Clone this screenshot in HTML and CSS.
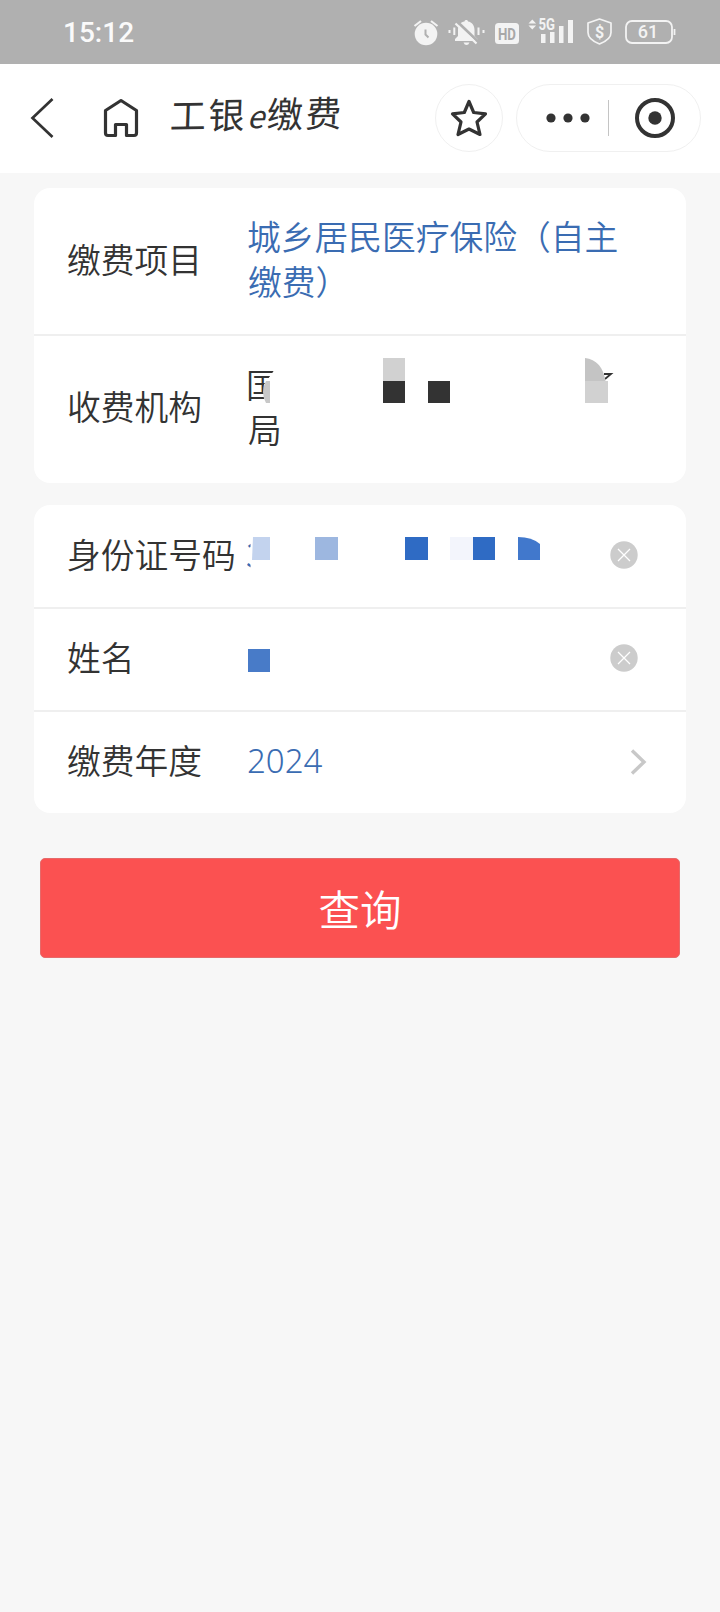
FILE: index.html
```
<!DOCTYPE html>
<html lang="zh-CN">

<head>
    <meta charset="UTF-8">
    <meta name="viewport" content="width=device-width, initial-scale=1.0">
    <title>工银e缴费</title>
    <link rel="stylesheet" href="styles.css">
</head>

<body>
    <div class="status">
        <span class="time">15:12</span>
        <svg class="status-icons" width="280" height="64" viewBox="400 0 280 64">
            <!-- alarm -->
            <circle cx="427" cy="34" r="11.3" fill="#f3f3f3" />
            <path d="M415.5 26l6.5-5M432 21l6.5 5" stroke="#f3f3f3" stroke-width="2.2" fill="none" />
            <path d="M426.5 29.5v5l3 3" stroke="#b0b0b0" stroke-width="2" fill="none" />
            <!-- muted bell -->
            <path d="M456 41v-2l3-3v-6c0-5 3-8 6.500-8.500c0-2 3.500-2 3.500 0c4 .5 6.500 4 6.500 8.500v6l3 3v2z" fill="#f3f3f3" />
            <path d="M464.500 42.500h6q-1 2.500-3 2.500t-3-2.500z" fill="#f3f3f3" />
            <path d="M458.500 22l22 21" stroke="#b0b0b0" stroke-width="3" />
            <path d="M456.500 23.500l21 20" stroke="#f3f3f3" stroke-width="2.200" />
            <path d="M450.500 30v3M455.300 27.500v7.500M479.500 27.500v7.500M484.500 30v3" stroke="#f3f3f3" stroke-width="2" />
            <!-- hd -->
            <rect x="496" y="23" width="24" height="21" rx="3.500" fill="#f3f3f3" />
            <text class="hd" x="508" y="39.500" text-anchor="middle" textLength="18" lengthAdjust="spacingAndGlyphs">HD</text>
            <!-- signal -->
            <path d="M529.500 23.500l3.800-4 3.800 4zM529.500 25.500l3.800 4 3.800-4z" fill="#f3f3f3" />
            <path d="M542 34h4.500v9h-4.500zM551 32h4.500v11h-4.500zM560 26h4.500v17h-4.500zM569 20h5v23h-5z" fill="#f3f3f3" />
            <text class="net" x="539.500" y="30" textLength="16.500" lengthAdjust="spacingAndGlyphs">5G</text>
            <!-- shield -->
            <path d="M600.500 19l11.500 4v9.500c0 5-5 9-11.500 11.500c-6.500-2.500-11.500-6.500-11.500-11.500v-9.500z" fill="none" stroke="#f3f3f3" stroke-width="1.700" stroke-linejoin="round" />
            <text class="dollar" x="600.500" y="37.500" text-anchor="middle">$</text>
            <!-- battery -->
            <rect x="627" y="21" width="46" height="22" rx="6" fill="none" stroke="#f3f3f3" stroke-width="1.800" />
            <path d="M675.500 29v6" stroke="#f3f3f3" stroke-width="1.800" />
            <text class="battery" x="649" y="38" text-anchor="middle">61</text>
        </svg>
    </div>

    <div class="nav">
        <svg class="back" width="24" height="40" viewBox="0 0 24 40">
            <path d="M22.500 1L2.500 20l20 19" fill="none" stroke="#333" stroke-width="2.700" />
        </svg>
        <svg class="home" width="36" height="40" viewBox="0 0 36 40">
            <path d="M18 2.500L33.500 12.500V35q0 2.500-2.500 2.500H23.500V26.500H12.500V37.500H5q-2.500 0-2.500-2.500V12.500z" fill="none" stroke="#333" stroke-width="3.200" stroke-linejoin="round" />
        </svg>
        <h1 class="title">工银<i>e</i>缴费</h1>
        <div class="star">
            <svg width="40" height="40" viewBox="0 0 40 40">
                <path d="M20 3.500L24.700 14.500L36.500 15.800L28 24L31 36.500L20 31L9 36.500L12 24L3.500 15.800L15.300 14.500z" fill="none" stroke="#333" stroke-width="3.200" stroke-linejoin="round" />
            </svg>
        </div>
        <div class="capsule">
            <svg class="dots" width="44" height="10" viewBox="0 0 44 10">
                <circle cx="5" cy="5" r="4.600" fill="#333" />
                <circle cx="22" cy="5" r="4.600" fill="#333" />
                <circle cx="39" cy="5" r="4.600" fill="#333" />
            </svg>
            <span class="line"></span>
            <svg width="40" height="40" viewBox="0 0 40 40">
                <circle cx="20" cy="20" r="18" fill="none" stroke="#333" stroke-width="4" />
                <circle cx="20" cy="20" r="6.700" fill="#333" />
            </svg>
        </div>
    </div>

    <div class="card">
        <div class="row tall">
            <span class="label">缴费项目</span>
            <span class="value">城乡居民医疗保险（自主缴费）</span>
        </div>
        <div class="row tall">
            <span class="label">收费机构</span>
            <span class="value dark"><span class="cut">国</span><br>局
                <svg class="mask" width="380" height="50" viewBox="248 356 380 50">
                    <path d="M270 381v22h-4q-6-11 0-22z" fill="#c8c8c8" />
                    <path d="M383 358h22v23h-22z" fill="#d1d1d1" />
                    <path d="M383 381h22v22h-22zM428 381h22v22h-22z" fill="#333" />
                    <path d="M604 374h7l-6 5" fill="none" stroke="#333" stroke-width="1.800" />
                    <path d="M585 358q17 2 20.500 23h-20.500z" fill="#c4c4c4" />
                    <path d="M585 381h23v22h-23z" fill="#d1d1d1" />
                </svg>
            </span>
        </div>
    </div>

    <div class="card">
        <div class="row">
            <span class="label">身份证号码</span>
            <span class="value"><span class="digit">3</span>
                <svg class="mask id" width="300" height="23" viewBox="248 537 300 23">
                    <path d="M253 537h17v23h-18z" fill="#c3d3ee" />
                    <path d="M315 537h23v23h-23z" fill="#9db7e0" />
                    <path d="M405 537h23v23h-23zM473 537h22v23h-22z" fill="#2f6bc4" />
                    <path d="M450 537h23v23h-23z" fill="#f3f5fc" />
                    <path d="M518 537q14 0 22 7v16h-22z" fill="#4178cc" />
                </svg>
            </span>
            <svg class="clear" width="28" height="28" viewBox="0 0 28 28">
                <circle cx="14" cy="14" r="13.700" fill="#ccc" />
                <path d="M8 8l12 12M20 8L8 20" stroke="#fff" stroke-width="1.300" />
            </svg>
        </div>
        <div class="row">
            <span class="label">姓名</span>
            <span class="value"><span class="block"></span></span>
            <svg class="clear" width="28" height="28" viewBox="0 0 28 28">
                <circle cx="14" cy="14" r="13.700" fill="#ccc" />
                <path d="M8 8l12 12M20 8L8 20" stroke="#fff" stroke-width="1.300" />
            </svg>
        </div>
        <div class="row">
            <span class="label">缴费年度</span>
            <span class="value year">2024</span>
            <svg class="arrow" width="18" height="26" viewBox="0 0 18 26">
                <path d="M2 1.500L14 13L2 24.500" fill="none" stroke="#c8c8c8" stroke-width="3.400" />
            </svg>
        </div>
    </div>

    <button class="query">查询</button>
</body>

</html>
```
FILE: styles.css
```
* {
    box-sizing: border-box;
}

body {
    margin: 0;
    min-height: 1612px;
    background-color: #f7f7f7;
    color: #333;
    font-family: "Noto Sans CJK SC", sans-serif;
    font-weight: 350;
}

.status {
    display: flex;
    justify-content: space-between;
    align-items: center;
    height: 64px;
    padding: 0 41px 0 63px;
    background-color: #b0b0b0;
    color: #fafafa;
}

.time {
    font-family: Roboto, sans-serif;
    font-size: 28px;
    font-weight: 500;
    padding-top: 1px;
}

.status text {
    font-family: Roboto, sans-serif;
    font-weight: 700;
    fill: #f3f3f3;
}

.status .hd {
    font-size: 17px;
    fill: #a8a8a8;
}

.status .net {
    font-size: 16px;
    stroke: #b0b0b0;
    stroke-width: 2px;
    paint-order: stroke;
}

.status .dollar {
    font-size: 16px;
}

.status .battery {
    font-size: 18px;
    font-weight: 500;
}

.nav {
    display: flex;
    align-items: center;
    height: 109px;
    padding: 0 19px 2px 30px;
    background-color: #fff;
}

.home {
    margin-left: 49px;
}

.title {
    margin: 0 0 8px 31px;
    width: 180px;
    font-size: 36px;
    font-weight: 400;
    line-height: 50px;
    letter-spacing: 2.6px;
    white-space: nowrap;
    transform: skewX(-3deg) rotate(-1deg);
}

.title i {
    font-size: 31px;
}

.star {
    display: flex;
    justify-content: center;
    align-items: center;
    width: 68px;
    height: 68px;
    margin-left: auto;
    border: 1px solid #f0f0f0;
    border-radius: 50%;
}

.capsule {
    display: flex;
    align-items: center;
    width: 185px;
    height: 68px;
    margin-left: 13px;
    padding-left: 29px;
    border: 1px solid #f0f0f0;
    border-radius: 34px;
}

.line {
    width: 1px;
    height: 36px;
    margin: 0 26px 0 18px;
    background-color: #c4c4c4;
}

.card {
    margin: 15px 34px 0;
    border-radius: 16px;
    background-color: #fff;
}

.card + .card {
    margin-top: 22px;
}

.row {
    display: flex;
    align-items: center;
    height: 102px;
    padding: 0 34px 6px 33px;
    font-size: 33.75px;
    line-height: 45px;
}

.row + .row {
    height: 103px;
    border-top: 2px solid #efefef;
}

.row.tall {
    height: 146px;
    padding-bottom: 6px;
}

.row.tall + .tall {
    height: 149px;
    padding-bottom: 8px;
}

.label {
    width: 181px;
    white-space: nowrap;
}

.value {
    position: relative;
    width: 380px;
    color: #3a6cb2;
    text-indent: -1px;
}

.dark {
    color: #333;
}

.year {
    top: 1px;
    font-family: "Noto Sans", sans-serif;
    font-size: 33px;
    font-weight: 350;
}

.cut {
    display: inline-block;
    clip-path: polygon(0 0, 27px 0, 27px 10px, 17px 24px, 17px 45px, 0 45px);
}

/* mosaic over the private parts of a value */
.mask {
    position: absolute;
    left: 0;
    top: -5px;
}

.mask.id {
    top: 6px;
}

.digit {
    display: inline-block;
    clip-path: inset(0 14px 0 0);
}

.block {
    display: block;
    width: 22px;
    height: 23px;
    margin-top: 7px;
    background-color: #487bc8;
}

.clear {
    margin: 3px 0 0 -18px;
}

.arrow {
    margin: 4px 0 0 2px;
}

.query {
    display: block;
    width: 640px;
    height: 100px;
    margin: 45px auto 0;
    border: 1px solid #e66a6a;
    border-radius: 5px;
    background-color: #fb5151;
    color: #fff;
    font-family: inherit;
    font-size: 41.5px;
    font-weight: 350;
}
```
